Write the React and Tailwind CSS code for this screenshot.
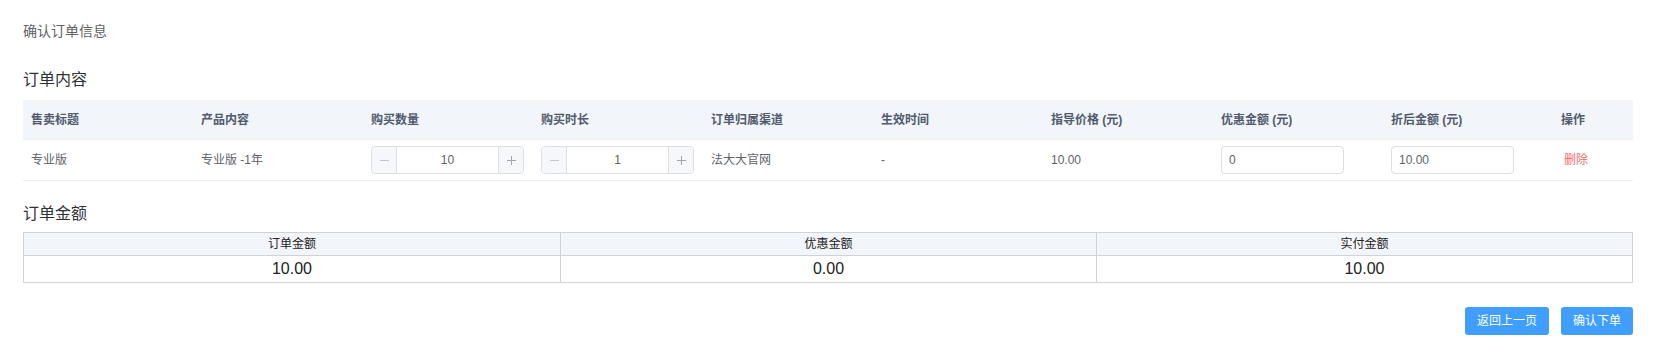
import React, { useState } from "react";

const FONT = { fontFamily: '"Liberation Sans", "Noto Sans CJK SC", sans-serif' };

const columns = [
  "售卖标题",
  "产品内容",
  "购买数量",
  "购买时长",
  "订单归属渠道",
  "生效时间",
  "指导价格 (元)",
  "优惠金额 (元)",
  "折后金额 (元)",
  "操作",
];

const Stepper = ({ value, onChange, min = 1 }) => (
  <div className="flex h-[28px] w-[153px] items-stretch rounded-[4px] border border-[#dcdfe6] bg-white">
    <button
      className="flex w-[25px] items-center justify-center rounded-l-[4px] border-r border-[#dcdfe6] bg-[#f5f7fa] text-[#c0c4cc]"
      onClick={() => onChange(Math.max(min, value - 1))}
    >
      <svg width="9" height="9" viewBox="0 0 10 10">
        <path d="M0 5h10" stroke="currentColor" strokeWidth="1.1" />
      </svg>
    </button>
    <div className="flex flex-1 items-center justify-center text-[12px] text-[#606266]">{value}</div>
    <button
      className="flex w-[25px] items-center justify-center rounded-r-[4px] border-l border-[#dcdfe6] bg-[#f5f7fa] text-[#a0a3a8]"
      onClick={() => onChange(value + 1)}
    >
      <svg width="9" height="9" viewBox="0 0 10 10">
        <path d="M0 5h10M5 0v10" stroke="currentColor" strokeWidth="1.1" />
      </svg>
    </button>
  </div>
);

export default function App() {
  const [qty, setQty] = useState(10);
  const [months, setMonths] = useState(1);

  return (
    <div className="min-h-[355px] bg-white pl-[23px] pr-[30px] pt-[21px]" style={FONT}>
      {/* Page title */}
      <div className="h-[20px] text-[14px] leading-[20px] text-[#606266]">确认订单信息</div>

      {/* Order content */}
      <div className="mt-[28px] h-[22px] text-[16px] leading-[22px] text-[#303133]">订单内容</div>
      <div className="mt-[9px] text-[12px]">
        <div className="grid h-[40px] grid-cols-[repeat(9,170px)_1fr] items-center border-b border-[#ebeef5] bg-[#f2f5f9] font-bold text-[#515a6e]">
          {columns.map((c) => (
            <div key={c} className="pl-[8px]">{c}</div>
          ))}
        </div>
        <div className="grid h-[41px] grid-cols-[repeat(9,170px)_1fr] items-center border-b border-[#ebeef5] text-[#606266]">
          <div className="pl-[8px]">专业版</div>
          <div className="pl-[8px]">专业版 -1年</div>
          <div className="pl-[8px]">
            <Stepper value={qty} onChange={setQty} />
          </div>
          <div className="pl-[8px]">
            <Stepper value={months} onChange={setMonths} />
          </div>
          <div className="pl-[8px]">法大大官网</div>
          <div className="pl-[8px]">-</div>
          <div className="pl-[8px]">10.00</div>
          <div className="pl-[8px]">
            <input
              defaultValue="0"
              className="h-[28px] w-[123px] rounded-[4px] border border-[#dcdfe6] px-[7px] text-[12px] text-[#606266] outline-none"
            />
          </div>
          <div className="pl-[8px]">
            <input
              defaultValue="10.00"
              className="h-[28px] w-[123px] rounded-[4px] border border-[#dcdfe6] px-[7px] text-[12px] text-[#606266] outline-none"
            />
          </div>
          <div className="pl-[11px]">
            <button className="text-[#f56c6c]">删除</button>
          </div>
        </div>
      </div>

      {/* Order amount */}
      <div className="mt-[22px] h-[22px] text-[16px] leading-[22px] text-[#303133]">订单金额</div>
      <div className="mt-[7px] grid grid-cols-3 border border-[#cfd2d8] text-center text-[#222]">
        <div className="flex h-[23px] items-center justify-center border-b border-[#cfd2d8] bg-[#f2f5f9] text-[12px]">订单金额</div>
        <div className="flex h-[23px] items-center justify-center border-b border-l border-[#cfd2d8] bg-[#f2f5f9] text-[12px]">优惠金额</div>
        <div className="flex h-[23px] items-center justify-center border-b border-l border-[#cfd2d8] bg-[#f2f5f9] text-[12px]">实付金额</div>
        <div className="flex h-[26px] items-center justify-center text-[16px]">10.00</div>
        <div className="flex h-[26px] items-center justify-center border-l border-[#cfd2d8] text-[16px]">0.00</div>
        <div className="flex h-[26px] items-center justify-center border-l border-[#cfd2d8] text-[16px]">10.00</div>
      </div>

      {/* Actions */}
      <div className="mt-[24px] flex justify-end gap-[12px]">
        <button className="h-[28px] rounded-[3px] bg-[#409eff] px-[12px] text-[12px] text-white">返回上一页</button>
        <button className="h-[28px] rounded-[3px] bg-[#409eff] px-[12px] text-[12px] text-white">确认下单</button>
      </div>
    </div>
  );
}
